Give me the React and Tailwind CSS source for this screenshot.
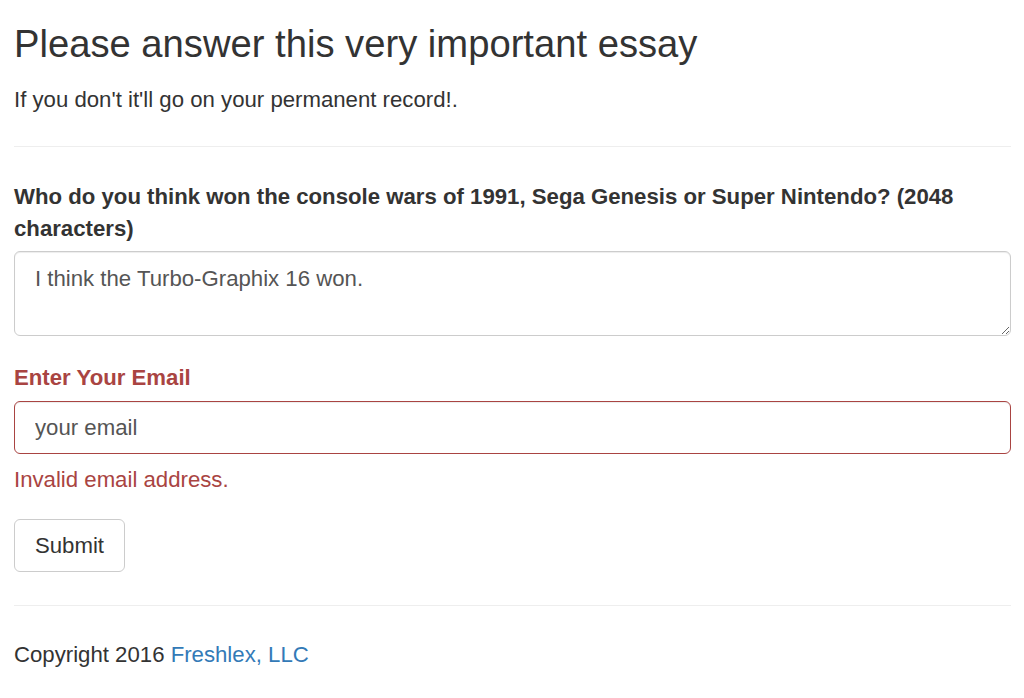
import React from "react";

export default function App() {
  return (
    <div className="min-h-screen bg-white px-[14px] pr-[13px] font-['Liberation_Sans',Arial,sans-serif] text-[22.2px] leading-[32px] text-[#333]">
      <h3 className="mt-[23px] mb-[19px] text-[38.2px] leading-[42px] font-normal">
        Please answer this very important essay
      </h3>
      <p>If you don't it'll go on your permanent record!.</p>
      <hr className="mt-[30px] mb-[34px] border-t border-[#eee]" />
      <form onSubmit={(e) => e.preventDefault()}>
        <label className="block font-bold mb-[6px]">
          Who do you think won the console wars of 1991, Sega Genesis or Super Nintendo? (2048 characters)
        </label>
        <textarea
          readOnly
          defaultValue="I think the Turbo-Graphix 16 won."
          className="block w-full h-[85px] rounded-[6px] border border-[#ccc] px-[20px] pt-[11px] pb-[8px] text-[22.2px] leading-[32px] text-[#555] shadow-[inset_0_1px_1px_rgba(0,0,0,0.075)] outline-none"
        />
        <label className="block mt-[26px] mb-[7px] font-bold text-[#a94442]">
          Enter Your Email
        </label>
        <input
          readOnly
          defaultValue="your email"
          className="block w-full h-[53px] rounded-[6px] border border-[#a94442] px-[20px] text-[22.2px] text-[#555] shadow-[inset_0_1px_1px_rgba(0,0,0,0.075)] outline-none"
        />
        <p className="mt-[10px] text-[#a94442]">Invalid email address.</p>
        <button
          type="submit"
          className="mt-[23px] h-[53px] w-[111px] rounded-[6px] border border-[#ccc] bg-white text-[22.2px] text-[#333]"
        >
          Submit
        </button>
      </form>
      <hr className="mt-[33px] mb-[33px] border-t border-[#eee]" />
      <footer>
        Copyright 2016 <a href="#" className="text-[#337ab7]">Freshlex, LLC</a>
      </footer>
    </div>
  );
}
